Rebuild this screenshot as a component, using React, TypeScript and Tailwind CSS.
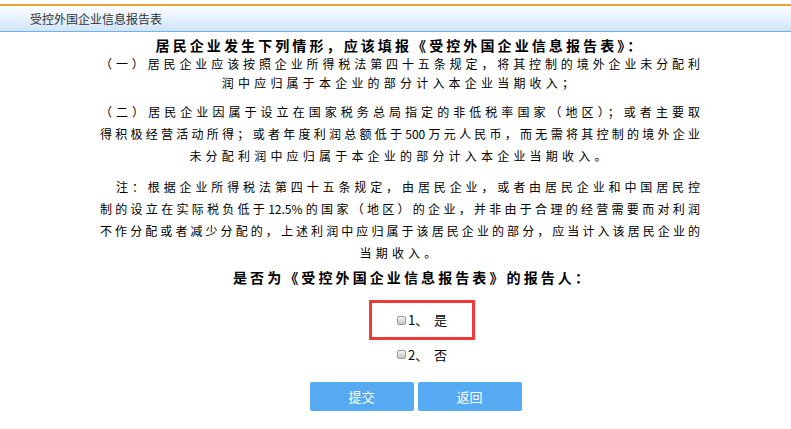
import React from "react";

const Check = () => (
  <span className="inline-block w-[9px] h-[9px] rounded-[2px] border border-[#9a9a9a] bg-gradient-to-b from-[#f4f4f4] to-[#c6c6c6] mr-[2px] align-middle relative top-[-1px]" />
);

const Full = ({ children, pad = false }: { children: React.ReactNode; pad?: boolean }) => (
  <div
    className={
      "whitespace-nowrap h-[22px] leading-[22px] text-justify [text-align-last:justify] " +
      (pad ? "pl-[16px]" : "")
    }
  >
    {children}
  </div>
);

const Short = ({ children }: { children: React.ReactNode }) => (
  <div className="whitespace-nowrap h-[22px] leading-[22px] text-center tracking-[4.2px]">{children}</div>
);

export default function App() {
  const font = { fontFamily: '"Noto Sans CJK SC", "Liberation Sans", sans-serif' };
  return (
    <div className="w-[791px] h-[429px] bg-white overflow-hidden" style={font}>
      <div className="h-[4px] bg-white" />
      <div className="h-[2px] bg-[#f0a030]" />
      <div className="h-[25px] bg-gradient-to-b from-[#fdfeff] to-[#cfe4fa] flex items-center pl-[30px] text-[12px] text-[#333]">
        受控外国企业信息报告表
      </div>
      <div className="h-[1px] bg-[#6fb1ee]" />
      <div className="w-[600px] ml-[100px] text-black text-[12px] pt-[4px]">
        <div className="whitespace-nowrap h-[18px] leading-[18px] text-center font-bold text-[14px] tracking-[3.1px]">
          居民企业发生下列情形，应该填报《受控外国企业信息报告表》：
        </div>
        <div className="whitespace-nowrap h-[20px] leading-[20px] text-justify [text-align-last:justify]">
          （一）居民企业应该按照企业所得税法第四十五条规定，将其控制的境外企业未分配利
        </div>
        <div className="whitespace-nowrap h-[18px] leading-[18px] text-center tracking-[4.2px]">
          润中应归属于本企业的部分计入本企业当期收入；
        </div>
        <div className="h-[9px]" />
        <Full>（二）居民企业因属于设立在国家税务总局指定的非低税率国家（地区）；或者主要取</Full>
        <Full>得积极经营活动所得；或者年度利润总额低于500万元人民币，而无需将其控制的境外企业</Full>
        <Short>未分配利润中应归属于本企业的部分计入本企业当期收入。</Short>
        <div className="h-[9px]" />
        <Full pad>注：根据企业所得税法第四十五条规定，由居民企业，或者由居民企业和中国居民控</Full>
        <Full>制的设立在实际税负低于12.5%的国家（地区）的企业，并非由于合理的经营需要而对利润</Full>
        <Full>不作分配或者减少分配的，上述利润中应归属于该居民企业的部分，应当计入该居民企业的</Full>
        <Short>当期收入。</Short>
        <div className="h-[2px]" />
        <div className="whitespace-nowrap h-[22px] leading-[22px] text-center font-bold text-[14px] tracking-[3.1px] pl-[25px]">
          是否为《受控外国企业信息报告表》的报告人：
        </div>
      </div>
      <div className="flex flex-col items-center text-[13px] text-black mt-[12px] pl-[53px]">
        <div className="w-[106px] h-[40px] border-[3px] border-[#f03a3a] flex items-center justify-center">
          <span className="whitespace-nowrap">
            <Check />1、&nbsp;&nbsp;是
          </span>
        </div>
        <div className="h-[30px] flex items-center whitespace-nowrap">
          <Check />2、&nbsp;&nbsp;否
        </div>
      </div>
      <div className="flex justify-center gap-[4px] mt-[12px] pl-[40px]">
        <button className="w-[104px] h-[29px] rounded-[2px] bg-[#55aaf2] text-white text-[13px]">提交</button>
        <button className="w-[104px] h-[29px] rounded-[2px] bg-[#55aaf2] text-white text-[13px]">返回</button>
      </div>
    </div>
  );
}
